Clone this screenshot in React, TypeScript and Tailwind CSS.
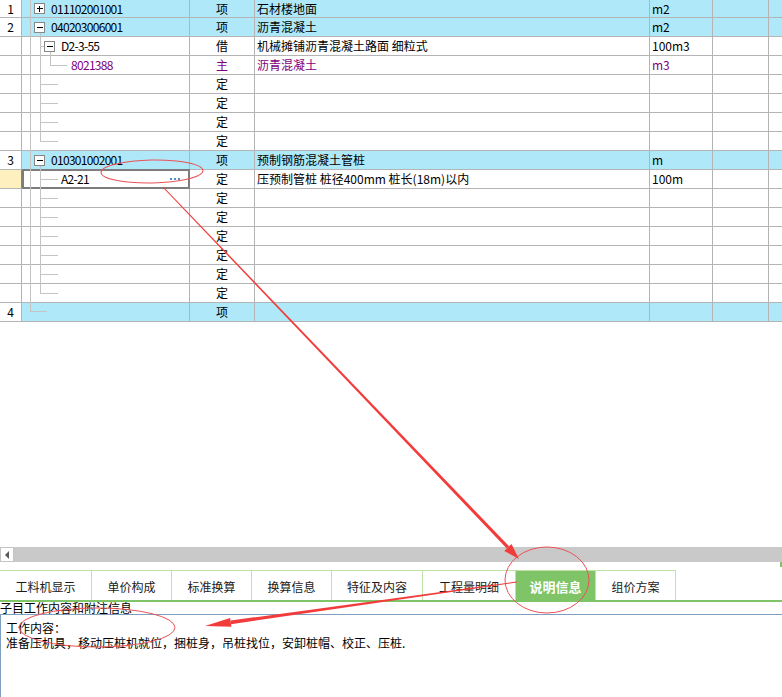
type Row = {
  num?: string;
  code?: string;
  type: string;
  name?: string;
  unit?: string;
  item?: boolean;
  pl?: string;
  purple?: boolean;
  selected?: boolean;
};

const ding: Row = { type: '定' };

const rows: Row[] = [
  { num: '1', code: '011102001001', type: '项', name: '石材楼地面', unit: 'm2', item: true, pl: 'pl-[29px]' },
  { num: '2', code: '040203006001', type: '项', name: '沥青混凝土', unit: 'm2', item: true, pl: 'pl-[29px]' },
  { code: 'D2-3-55', type: '借', name: '机械摊铺沥青混凝土路面 细粒式', unit: '100m3', pl: 'pl-[39px]' },
  { code: '8021388', type: '主', name: '沥青混凝土', unit: 'm3', pl: 'pl-[49px]', purple: true },
  ding, ding, ding, ding,
  { num: '3', code: '010301002001', type: '项', name: '预制钢筋混凝土管桩', unit: 'm', item: true, pl: 'pl-[29px]' },
  { code: 'A2-21', type: '定', name: '压预制管桩 桩径400mm 桩长(18m)以内', unit: '100m', pl: 'pl-[39px]', selected: true },
  ding, ding, ding, ding, ding, ding,
  { num: '4', type: '项', item: true },
];

const tabs = [
  { label: '工料机显示', w: 'w-[92px]' },
  { label: '单价构成', w: 'w-[80px]' },
  { label: '标准换算', w: 'w-[80px]' },
  { label: '换算信息', w: 'w-[80px]' },
  { label: '特征及内容', w: 'w-[91px]' },
  { label: '工程量明细', w: 'w-[93px]' },
  { label: '说明信息', w: 'w-[80px]', active: true },
  { label: '组价方案', w: 'w-[80px]' },
];

function GridRow({ r, first }: { r: Row; first: boolean }) {
  const bg = r.item ? 'bg-[#aee8f9]' : 'bg-white';
  const color = r.purple ? 'text-[#800080]' : 'text-black';
  return (
    <div className={`flex border-b border-[#b4b4b4] ${first ? 'h-[18px]' : 'h-[19px]'} ${color}`}>
      <div
        className={`w-[22px] shrink-0 border-r flex items-center justify-center ${
          r.selected ? 'bg-[#fff0c0] border-[#3a9ad9]' : 'bg-white border-[#b4b4b4]'
        }`}
      >
        {r.num}
      </div>
      <div
        className={`relative w-[168px] shrink-0 border-r border-[#b4b4b4] flex items-center tracking-[-0.7px] ${bg} ${
          r.pl ?? ''
        }`}
      >
        {r.code}
        {r.selected && (
          <>
            <div className="absolute -top-px left-0 -right-px -bottom-px border-2 border-[#7d7d7d]" />
            <div className="absolute left-[148px] top-[8px] flex gap-[2px]">
              <div className="w-[2px] h-[2px] bg-[#4a8ed6]" />
              <div className="w-[2px] h-[2px] bg-[#4a8ed6]" />
              <div className="w-[2px] h-[2px] bg-[#4a8ed6]" />
            </div>
          </>
        )}
      </div>
      <div className={`w-[65px] shrink-0 border-r border-[#b4b4b4] flex items-center justify-center ${bg}`}>{r.type}</div>
      <div className={`w-[395px] shrink-0 border-r border-[#b4b4b4] flex items-center pl-[2px] whitespace-nowrap ${bg}`}>
        {r.name}
      </div>
      <div className={`w-[63px] shrink-0 border-r border-[#b4b4b4] flex items-center pl-[2px] ${bg}`}>{r.unit}</div>
      <div className={`w-[56px] shrink-0 border-r border-[#b4b4b4] ${bg}`} />
      <div className={`flex-1 ${bg}`} />
    </div>
  );
}

function TreeLines() {
  const c = '#c4c4c4';
  const h = (y: number, x1: number, x2: number) => (
    <line key={`h${y}-${x1}`} x1={x1} y1={y + 0.5} x2={x2} y2={y + 0.5} stroke={c} />
  );
  const box = (x: number, y: number, plus: boolean) => (
    <g key={`b${y}`}>
      <rect x={x + 0.5} y={y + 0.5} width={10} height={10} fill="white" stroke="#878787" />
      <line x1={x + 3} y1={y + 5.5} x2={x + 9} y2={y + 5.5} stroke="black" />
      {plus && <line x1={x + 5.5} y1={y + 3} x2={x + 5.5} y2={y + 9} stroke="black" />}
    </g>
  );
  return (
    <svg className="absolute left-0 top-0 pointer-events-none" width={190} height={322}>
      <line x1={30.5} y1={0} x2={30.5} y2={311.5} stroke={c} />
      {h(311, 30, 47)}
      <line x1={40.5} y1={33} x2={40.5} y2={141.5} stroke={c} />
      {h(46, 40, 44)}
      {[84, 103, 122, 141].map((y) => h(y, 40, 58))}
      <line x1={50.5} y1={52} x2={50.5} y2={65.5} stroke={c} />
      {h(65, 50, 67)}
      <line x1={40.5} y1={166} x2={40.5} y2={293.5} stroke={c} />
      {[179, 198, 217, 236, 255, 274, 293].map((y) => h(y, 40, 58))}
      {box(34, 3, true)}
      {box(34, 22, false)}
      {box(44, 41, false)}
      {box(34, 155, false)}
    </svg>
  );
}

function arrow(sx: number, sy: number, tx: number, ty: number, head: number, hw: number, w0: number, w1: number) {
  const dx = tx - sx;
  const dy = ty - sy;
  const len = Math.hypot(dx, dy);
  const ux = dx / len;
  const uy = dy / len;
  const nx = -uy;
  const ny = ux;
  const bx = tx - ux * head;
  const by = ty - uy * head;
  const p = (x: number, y: number) => `${x.toFixed(1)},${y.toFixed(1)}`;
  const body = [
    p(sx + nx * w0, sy + ny * w0),
    p(bx + nx * w1, by + ny * w1),
    p(bx - nx * w1, by - ny * w1),
    p(sx - nx * w0, sy - ny * w0),
  ].join(' ');
  const tip = [p(bx + nx * hw, by + ny * hw), p(tx, ty), p(bx - nx * hw, by - ny * hw)].join(' ');
  return { body, tip };
}

function Annotations() {
  const a1 = arrow(163, 187, 519, 559, 16, 5, 0.5, 1.6);
  const a2 = arrow(517, 582, 205, 626, 26, 4.5, 0.5, 1.8);
  const red = '#f23c3c';
  return (
    <svg className="absolute inset-0 pointer-events-none" width={782} height={697}>
      <ellipse cx={152} cy={171.5} rx={51} ry={11.5} fill="none" stroke="#ea5257" strokeWidth={1} transform="rotate(-1 152 171)" />
      <ellipse cx={547} cy={580} rx={42} ry={33} fill="none" stroke="#ea5257" strokeWidth={1} />
      <ellipse cx={97} cy={627.5} rx={78} ry={19.5} fill="none" stroke="#ea5257" strokeWidth={1} />
      <polygon points={a1.body} fill={red} />
      <polygon points={a1.tip} fill={red} />
      <polygon points={a2.body} fill={red} />
      <polygon points={a2.tip} fill={red} />
    </svg>
  );
}

export default function App() {
  return (
    <div className="relative w-[782px] h-[697px] overflow-hidden bg-white text-[12px] leading-[12px] text-black font-['Noto_Sans_CJK_SC',sans-serif]">
      <div className="relative h-[322px]">
        {rows.map((r, i) => (
          <GridRow key={i} r={r} first={i === 0} />
        ))}
        <TreeLines />
      </div>

      <div className="h-[225px]" />

      {/* horizontal scrollbar */}
      <div className="flex h-[15px] bg-[#c9c9c9]">
        <div className="w-[14px] h-full bg-white border border-[#c4c4c4] flex items-center justify-center">
          <div className="w-0 h-0 border-y-[4px] border-y-transparent border-r-[4px] border-r-[#5a5a5a]" />
        </div>
        <div className="flex-1" />
      </div>

      <div className="h-[8px] flex justify-end">
        <div className="w-[2px] h-[5px] bg-[#7fc466]" />
      </div>

      {/* tabs */}
      <div className="flex h-[32px] border-b-2 border-[#7fc466]">
        {tabs.map((t) => (
          <div
            key={t.label}
            className={`${t.w} h-[30px] shrink-0 border-t border-r border-[#bde3a9] flex items-center justify-center pt-[2px] ${
              t.active ? 'bg-[#7fc466] text-white font-bold text-[13px]' : 'text-[#1a1a1a]'
            }`}
          >
            {t.label}
          </div>
        ))}
        <div className="flex-1" />
      </div>

      <div className="h-[12px] whitespace-nowrap">子目工作内容和附注信息</div>

      <div className="h-[83px] border-t border-l border-[#7f9fc0] pl-[5px] pt-[5px]">
        <div className="h-[15px] leading-[15px]">工作内容：</div>
        <div className="h-[15px] leading-[15px] whitespace-nowrap">
          准备压机具，移动压桩机就位，捆桩身，吊桩找位，安卸桩帽、校正、压桩.
        </div>
      </div>

      <Annotations />
    </div>
  );
}
